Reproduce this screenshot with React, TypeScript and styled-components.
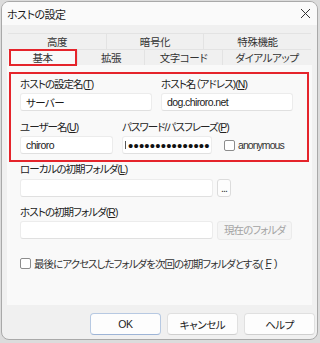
import styled, { createGlobalStyle } from 'styled-components';

const GlobalStyle = createGlobalStyle`
  html, body {
    margin: 0;
    padding: 0;
    background: #dcdcdc;
  }
  body {
    font-family: "Liberation Sans", "Noto Sans CJK JP", sans-serif;
    font-size: 10.5px;
    font-feature-settings: "palt" 1;
    letter-spacing: -0.95px;
    color: #1a1a1a;
  }
`;

const Window = styled.div`
  margin: 1px 0 0 1px;
  width: 315px;
  height: 337px;
  border: 1px solid #a9a9a9;
  border-radius: 8px;
  background: #f0f0f0;
  overflow: hidden;
  display: flex;
  flex-direction: column;
`;

const TitleBar = styled.div`
  height: 23px;
  flex: none;
  background: #fafafa;
  display: flex;
  align-items: center;
  justify-content: space-between;
  padding: 0 6px 0 5px;
  font-size: 11px;
  letter-spacing: -0.5px;
  color: #1a1a1a;
`;

const Body = styled.div`
  padding-top: 8px;
  display: flex;
  flex-direction: column;
`;

const TabRow = styled.div<{ $cols: string }>`
  margin-left: 6px;
  width: 303px;
  height: 16px;
  display: grid;
  grid-template-columns: ${(p) => p.$cols};
  border-top: 1px solid #e3e3e3;
  box-sizing: border-box;
`;

const Tab = styled.div<{ $active?: boolean }>`
  display: flex;
  align-items: center;
  justify-content: center;
  line-height: 14px;
  font-size: 10.5px;
  letter-spacing: -0.4px;
  white-space: nowrap;
  color: #333;
  background: ${(p) => (p.$active ? '#f9f9f9' : '#f0f0f0')};
  border-left: 1px solid ${(p) => (p.$active ? 'transparent' : '#e3e3e3')};
  box-sizing: border-box;
  position: relative;
  &:first-child {
    border-left: none;
  }
`;

const TabMark = styled.span`
  position: absolute;
  inset: -1px 0 -1px 1px;
  border: 2px solid #e5242b;
`;

const Panel = styled.div`
  margin-left: 5px;
  width: 305px;
  height: 240px;
  box-sizing: border-box;
  background: #f9f9f9;
  padding-top: 7px;
`;

const RedBox = styled.div`
  margin-left: 2px;
  width: 300px;
  box-sizing: border-box;
  border: 2px solid #e5242b;
  padding: 3px 0 6px 9px;
`;

const Row = styled.div<{ $top?: number }>`
  display: flex;
  align-items: flex-end;
  margin-top: ${(p) => p.$top ?? 0}px;
`;

const Field = styled.div<{ $w: number; $gap?: number }>`
  flex: none;
  width: ${(p) => p.$w}px;
  min-width: 0;
  margin-right: ${(p) => p.$gap ?? 0}px;
  display: flex;
  flex-direction: column;
`;

const Label = styled.div<{ $mb?: number }>`
  line-height: 14px;
  height: 14px;
  white-space: nowrap;
  margin-bottom: ${(p) => p.$mb ?? 2}px;
  color: #222;
`;

const Input = styled.div<{ $w?: number }>`
  width: ${(p) => (p.$w ? `${p.$w}px` : 'auto')};
  height: 18px;
  box-sizing: border-box;
  background: #fff;
  border: 1px solid #ececec;
  border-bottom-color: #e0e0e0;
  border-radius: 3px;
  padding-left: 5px;
  display: flex;
  align-items: center;
  font-size: 10.5px;
  letter-spacing: -0.6px;
  color: #1a1a1a;
  white-space: nowrap;
  overflow: hidden;
`;

const Dots = styled.span`
  font-family: "Liberation Sans", sans-serif;
  font-size: 15px;
  letter-spacing: 0.2px;
  color: #111;
`;

const Caret = styled.span`
  display: inline-block;
  width: 1px;
  height: 8px;
  background: #555;
  margin-right: 2px;
`;

const CheckWrap = styled.label`
  display: flex;
  align-items: center;
  gap: 3px;
  height: 18px;
  color: #333;
  white-space: nowrap;
`;

const Box = styled.span`
  width: 11px;
  height: 11px;
  box-sizing: border-box;
  border: 1px solid #8c8c8c;
  border-radius: 2px;
  background: #fff;
  flex: none;
`;

const Section = styled.div`
  padding-left: 13px;
  display: flex;
  flex-direction: column;
`;

const InputLine = styled.div`
  display: flex;
  gap: 4px;
  align-items: flex-start;
`;

const SmallButton = styled.div<{ $w: number; $disabled?: boolean }>`
  width: ${(p) => p.$w}px;
  height: ${(p) => (p.$disabled ? 19 : 18)}px;
  box-sizing: border-box;
  border: 1px solid ${(p) => (p.$disabled ? '#ebebeb' : '#dcdcdc')};
  border-radius: 3px;
  background: ${(p) => (p.$disabled ? '#f5f5f5' : '#fdfdfd')};
  color: ${(p) => (p.$disabled ? '#a3a3a3' : '#333')};
  display: flex;
  align-items: center;
  justify-content: center;
  line-height: 1;
  white-space: nowrap;
`;

const Footer = styled.div`
  margin-top: 8px;
  padding-right: 2px;
  display: flex;
  justify-content: flex-end;
  gap: 6px;
`;

const Button = styled.div<{ $default?: boolean }>`
  width: 71px;
  height: 22px;
  box-sizing: border-box;
  background: #fdfdfd;
  border: 1px solid ${(p) => (p.$default ? '#b7c9e2' : '#e0e0e0')};
  border-bottom-color: ${(p) => (p.$default ? '#9db4d6' : '#cfcfcf')};
  border-radius: 4px;
  display: flex;
  align-items: center;
  justify-content: center;
  font-size: 10.5px;
  letter-spacing: -0.4px;
  color: #222;
`;

const CloseIcon = () => (
  <svg width="11" height="11" viewBox="0 0 11 11">
    <path d="M1 1 L10 10 M10 1 L1 10" stroke="#333" strokeWidth="1" />
  </svg>
);

export default function App() {
  return (
    <>
      <GlobalStyle />
      <Window>
        <TitleBar>
          <span>ホストの設定</span>
          <CloseIcon />
        </TitleBar>
        <Body>
          <TabRow $cols="98px 97px 108px">
            <Tab>高度</Tab>
            <Tab>暗号化</Tab>
            <Tab>特殊機能</Tab>
          </TabRow>
          <TabRow $cols="69px 67px 78px 89px">
            <Tab $active>
              基本
              <TabMark />
            </Tab>
            <Tab>拡張</Tab>
            <Tab>文字コード</Tab>
            <Tab>ダイアルアップ</Tab>
          </TabRow>
          <Panel>
            <RedBox>
              <Row>
                <Field $w={132} $gap={9}>
                  <Label>
                    ホストの設定名(<u>T</u>)
                  </Label>
                  <Input>サーバー</Input>
                </Field>
                <Field $w={132}>
                  <Label>
                    ホスト名（アドレス)(<u>N</u>)
                  </Label>
                  <Input>dog.chiroro.net</Input>
                </Field>
              </Row>
              <Row $top={9}>
                <Field $w={93} $gap={9}>
                  <Label>
                    ユーザー名(<u>U</u>)
                  </Label>
                  <Input>chiroro</Input>
                </Field>
                <Field $w={90} $gap={12}>
                  <Label>
                    パスワード/パスフレーズ(<u>P</u>)
                  </Label>
                  <Input style={{ paddingLeft: 2 }}>
                    <Caret />
                    <Dots>•••••••••••••••</Dots>
                  </Input>
                </Field>
                <CheckWrap>
                  <Box />
                  anonymous
                </CheckWrap>
              </Row>
            </RedBox>
            <Section>
              <Label $mb={3}>
                ローカルの初期フォルダ(<u>L</u>)
              </Label>
              <InputLine>
                <Input $w={193} />
                <SmallButton $w={14}>...</SmallButton>
              </InputLine>
              <Label style={{ marginTop: 8 }}>
                ホストの初期フォルダ(<u>R</u>)
              </Label>
              <InputLine>
                <Input $w={193} />
                <SmallButton $w={75} $disabled>
                  現在のフォルダ
                </SmallButton>
              </InputLine>
              <CheckWrap style={{ marginTop: 14 }}>
                <Box />
                最後にアクセスしたフォルダを次回の初期フォルダとする(<u>F</u>)
              </CheckWrap>
            </Section>
          </Panel>
          <Footer>
            <Button $default>OK</Button>
            <Button>キャンセル</Button>
            <Button>ヘルプ</Button>
          </Footer>
        </Body>
      </Window>
    </>
  );
}
